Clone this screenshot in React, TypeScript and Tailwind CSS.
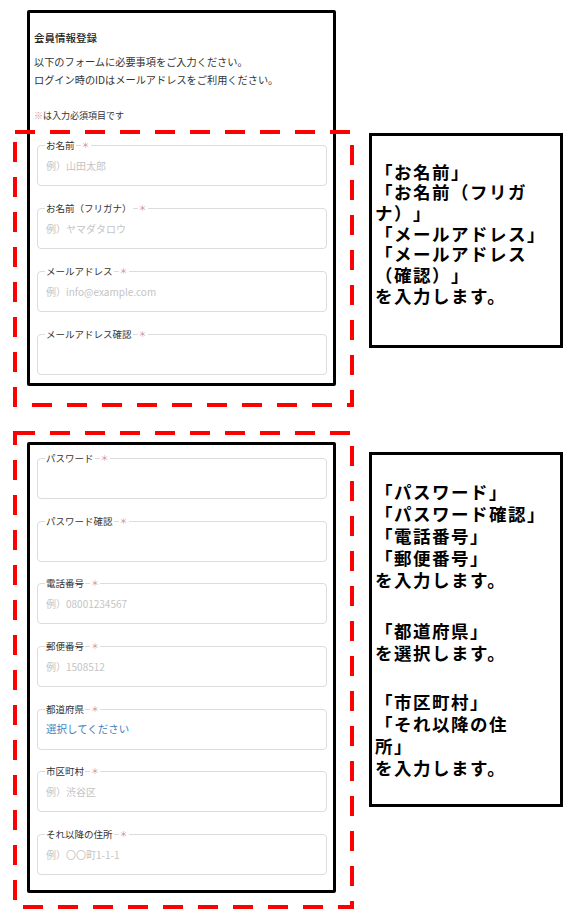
import React from "react";

type FieldProps = { label: string; placeholder?: string; select?: boolean };

function Field({ label, placeholder, select }: FieldProps) {
  return (
    <div className="relative flex h-[41px] items-center rounded-[4px] border-[1.5px] border-[#dcdcdc] pl-[8px]">
      <div className="absolute left-[7px] top-[-7px] flex items-center gap-[5px] leading-[12px]">
        <span className="bg-white px-[1px] text-[9.5px] text-[#333]">{label}</span>
        <span className="bg-white px-[1px] text-[8px] text-[#d38aa0]">＊</span>
      </div>
      {placeholder && (
        <span className={select ? "text-[10.5px] text-[#3f7fbf]" : "text-[10px] text-[#c4c4c4]"}>
          {placeholder}
        </span>
      )}
    </div>
  );
}

function RedFrame({ w, h, className }: { w: number; h: number; className: string }) {
  return (
    <svg className={className} width={w} height={h} viewBox={`0 0 ${w} ${h}`}>
      <rect
        x={2}
        y={2}
        width={w - 4}
        height={h - 4}
        fill="none"
        stroke="#ff0000"
        strokeWidth={4}
        strokeDasharray="20 15"
      />
    </svg>
  );
}

export default function App() {
  return (
    <div className="min-h-[918px] w-[571px] bg-white pt-[10px] font-['Noto_Sans_CJK_JP',sans-serif] text-[#333]">
      {/* Section 1 */}
      <div className="flex items-start">
        <div className="relative w-[336px] pl-[27px]">
          <div className="w-[309px] rounded-[2px] border-[3px] border-black px-[4px] pb-[8px] pt-[17px]">
            <div className="text-[10.5px] font-medium leading-[16px] text-[#222]">会員情報登録</div>
            <div className="mt-[7px] text-[10.2px] leading-[18px]">
              <div>以下のフォームに必要事項をご入力ください。</div>
              <div>ログイン時のIDはメールアドレスをご利用ください。</div>
            </div>
            <div className="mt-[18px] text-[9px] leading-[18px]">
              <span className="text-[#d38aa0]">※</span>は入力必須項目です
            </div>
            <div className="ml-[3px] mr-[2px] mt-[20px] flex flex-col gap-[22px]">
              <Field label="お名前" placeholder="例）山田太郎" />
              <Field label="お名前（フリガナ）" placeholder="例）ヤマダタロウ" />
              <Field label="メールアドレス" placeholder="例）info@example.com" />
              <Field label="メールアドレス確認" />
            </div>
          </div>
          <RedFrame w={341} h={277} className="pointer-events-none absolute left-[13px] top-[120px]" />
        </div>
        <div className="ml-[33px] mt-[123px] h-[215px] w-[194px] whitespace-nowrap border-[3px] border-black pl-[3px] pt-[25.5px] text-[17.5px] font-bold leading-[20.7px] tracking-[1.5px] text-black [text-spacing-trim:space-all]">
          <div>「お名前」</div>
          <div>「お名前（フリガ</div>
          <div>ナ）」</div>
          <div>「メールアドレス」</div>
          <div>「メールアドレス</div>
          <div>（確認）」</div>
          <div>を入力します。</div>
        </div>
      </div>

      {/* Section 2 */}
      <div className="mt-[45px] flex items-start">
        <div className="relative ml-[13px] w-[341px] pb-[14px] pl-[14px] pr-[18px] pt-[11px]">
          <div className="w-[309px] rounded-[2px] border-[3px] border-black px-[4px] pb-[15px] pt-[13px]">
            <div className="ml-[3px] mr-[2px] flex flex-col gap-[21.67px]">
              <Field label="パスワード" />
              <Field label="パスワード確認" />
              <Field label="電話番号" placeholder="例）08001234567" />
              <Field label="郵便番号" placeholder="例）1508512" />
              <Field label="都道府県" placeholder="選択してください" select />
              <Field label="市区町村" placeholder="例）渋谷区" />
              <Field label="それ以降の住所" placeholder="例）〇〇町1-1-1" />
            </div>
          </div>
          <RedFrame w={341} h={478} className="pointer-events-none absolute left-0 top-0" />
        </div>
        <div className="ml-[15px] mt-[21px] h-[355px] w-[194px] whitespace-nowrap border-[3px] border-black pl-[3px] pt-[26px] text-[17.5px] font-bold leading-[22px] tracking-[1.5px] text-black [text-spacing-trim:space-all]">
          <div>「パスワード」</div>
          <div>「パスワード確認」</div>
          <div>「電話番号」</div>
          <div>「郵便番号」</div>
          <div>を入力します。</div>
          <div className="mt-[29px]">「都道府県」</div>
          <div>を選択します。</div>
          <div className="mt-[27px]">「市区町村」</div>
          <div>「それ以降の住</div>
          <div>所」</div>
          <div>を入力します。</div>
        </div>
      </div>
    </div>
  );
}
